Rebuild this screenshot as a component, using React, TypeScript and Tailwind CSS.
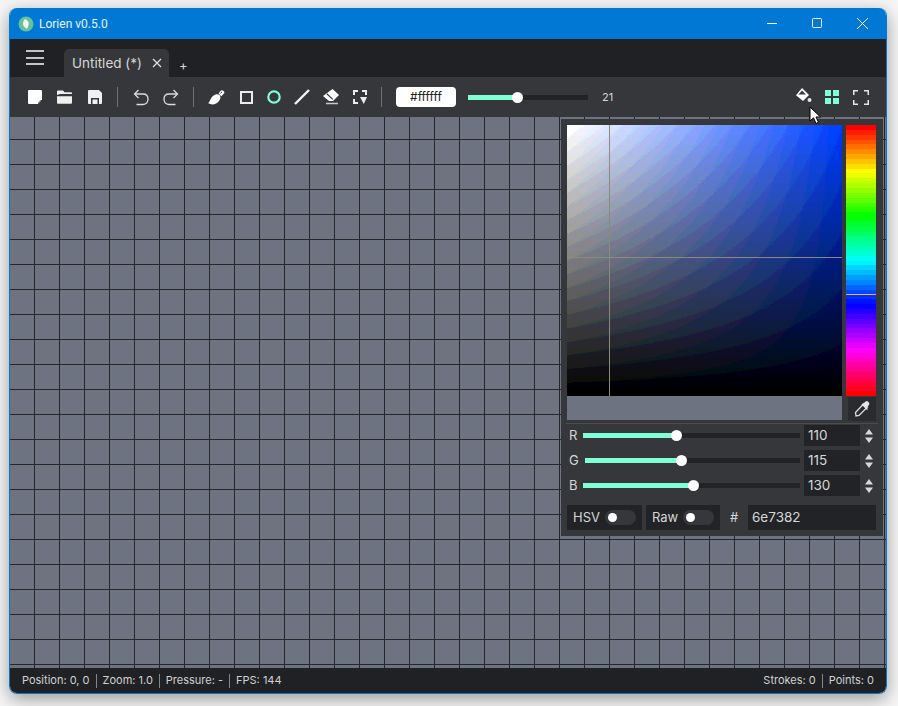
import type { ReactNode } from 'react';

const hueBands = Array.from({ length: 56 }, (_, i) => Math.round((i / 55) * 360) % 360);

// posterise the picker like the banded colours of the capture
const steps = (n: number) => Array.from({ length: n }, (_, i) => (i / (n - 1)).toFixed(3)).join(' ');

const rgbRows = [
  { label: 'R', value: 110, labelWidth: 'w-[16px]' },
  { label: 'G', value: 115, labelWidth: 'w-[18px]' },
  { label: 'B', value: 130, labelWidth: 'w-[16px]' },
];

function Separator({ className }: { className: string }) {
  return <div className={`h-[20px] w-px bg-[#6f7074] ${className}`} />;
}

function IconBox({ className, children }: { className: string; children: ReactNode }) {
  return <div className={`flex h-[20px] items-center justify-center ${className}`}>{children}</div>;
}

function ToggleBox({ label }: { label: string }) {
  return (
    <div className="flex h-[25px] items-center bg-[#222327] pl-[6px]">
      <span>{label}</span>
      <div className="absolute right-[6px] h-[15px] w-[31px] rounded-full bg-[#36373b]">
        <div className="absolute left-[3px] top-[3px] h-[9px] w-[9px] rounded-full bg-white" />
      </div>
    </div>
  );
}

function RgbRow({ label, value, labelWidth }: { label: string; value: number; labelWidth: string }) {
  return (
    <div className="flex h-[25px] items-center">
      <span className={`${labelWidth} pl-[2px] leading-none`}>{label}</span>
      <div className="relative h-[5px] flex-1 bg-[#222327]">
        <div className="h-full bg-[#7fffd4]" style={{ width: `${(value / 255) * 100}%` }} />
        <div
          className="absolute top-[-3px] -ml-[5.5px] h-[11px] w-[11px] rounded-full bg-white"
          style={{ left: `${(value / 255) * 100}%` }}
        />
      </div>
      <div className="ml-[4px] flex h-[21px] w-[56px] items-center bg-[#222327] pl-[4px] text-[13.5px]">{value}</div>
      <div className="flex w-[17px] flex-col items-center gap-[2px]">
        <svg width="8" height="6" viewBox="0 0 8 6">
          <path d="M4 0 8 5.500H0Z" fill="#d8d8d8" />
        </svg>
        <svg width="8" height="6" viewBox="0 0 8 6">
          <path d="M4 6 8 .5H0Z" fill="#d8d8d8" />
        </svg>
      </div>
    </div>
  );
}

export default function App() {
  return (
    <div className="relative h-[706px] w-[898px] overflow-hidden bg-[#f6f6f6] [font-family:Inter,sans-serif]">
      <svg width="0" height="0" className="absolute">
        <filter id="sv-bands" colorInterpolationFilters="sRGB">
          <feComponentTransfer>
            <feFuncR type="discrete" tableValues={steps(20)} />
            <feFuncG type="discrete" tableValues={steps(20)} />
            <feFuncB type="discrete" tableValues={steps(28)} />
          </feComponentTransfer>
        </filter>
      </svg>
      <div className="absolute left-[9px] top-[8px] flex h-[686px] w-[878px] flex-col overflow-hidden rounded-[8px] border border-t-0 border-[#0078d4] shadow-[0_5px_18px_rgba(0,0,0,0.38)]">
        {/* Title bar */}
        <div className="relative flex h-[31px] shrink-0 items-center bg-[#0078d4] pl-[8px]">
          <svg width="16" height="16" viewBox="0 0 16 16">
            <circle cx="8" cy="8" r="7.500" fill="#69c19b" />
            <path d="M6.800 3C9.800 4 11.300 6.400 10.600 9 10.200 10.600 9.400 11.800 9 12.800 8 11.800 5.400 10.800 5 8.400 4.700 6.400 6 4.600 6.800 3Z" fill="#f4f7f4" />
          </svg>
          <span className="ml-[5px] [font-family:Roboto,sans-serif] text-[12px] text-[#eaf6ff]">Lorien v0.5.0</span>
          <svg width="120" height="14" viewBox="0 0 120 14" className="absolute right-[12px] top-[8px]" fill="none" stroke="#fff" strokeWidth="1">
            <path d="M13 7.500H23" />
            <rect x="58.500" y="2.500" width="9" height="9" rx="1" />
            <path d="M103 2 114 13M114 2 103 13" />
          </svg>
        </div>

        {/* Menu and tabs */}
        <div className="relative flex h-[38px] shrink-0 items-end bg-[#202125] pl-[54px]">
          <div className="absolute left-[16px] top-[11px] flex w-[18px] flex-col gap-[4.500px]">
            <div className="h-[2px] bg-[#c4c4c4]" />
            <div className="h-[2px] bg-[#c4c4c4]" />
            <div className="h-[2px] bg-[#c4c4c4]" />
          </div>
          <div className="flex h-[28px] w-[105px] items-center rounded-t-[5px] bg-[#36373b] pl-[8px] text-[13.5px] text-[#d6d6d6]">
            <span className="w-[80px] shrink-0 whitespace-nowrap">Untitled (*)</span>
            <svg width="10" height="10" viewBox="0 0 10 10" stroke="#e2e2e2" strokeWidth="1.200">
              <path d="M1 1 9 9M9 1 1 9" />
            </svg>
          </div>
          <span className="mb-[3px] ml-[10px] text-[13px] leading-[18px] text-[#d6d6d6]">+</span>
        </div>

        {/* Toolbar */}
        <div className="relative flex h-[40px] shrink-0 items-center bg-[#36373b] pl-[10px]">
          <IconBox className="w-[30px]">
            <svg width="14" height="14" viewBox="0 0 14 14">
              <path d="M1 0H13Q14 0 14 1V9L9 14H1Q0 14 0 13V1Q0 0 1 0Z" fill="#fff" />
              <path d="M9 9H14V10H10.200V14H9Z" fill="#fff" />
              <path d="M10.800 11H13L10.800 13.200Z" fill="#9a9a9a" />
            </svg>
          </IconBox>
          <IconBox className="w-[30px]">
            <svg width="16" height="14" viewBox="0 0 16 14">
              <path d="M0 1.500Q0 .5 1 .5H6L7.500 2.200H14Q15 2.200 15 3.200V4H3L0 5Z" fill="#f0f0f0" />
              <path d="M0 6.300H15V12.800Q15 13.800 14 13.800H1Q0 13.800 0 12.800Z" fill="#f0f0f0" />
            </svg>
          </IconBox>
          <IconBox className="w-[30px]">
            <svg width="14" height="14" viewBox="0 0 14 14">
              <path d="M1 0H11L14 3V13Q14 14 13 14H1Q0 14 0 13V1Q0 0 1 0Z" fill="#f0f0f0" />
              <path d="M3 8H11V14H9.500V9.500H4.500V14H3Z" fill="#36373b" />
            </svg>
          </IconBox>
          <Separator className="ml-[7px]" />
          <IconBox className="ml-[8px] w-[30px]">
            <svg width="16" height="17" viewBox="0 0 16 17" fill="none" stroke="#dcdcdc" strokeWidth="1.300">
              <path d="M5.500 1 1.500 5 5.500 9" />
              <path d="M2 5H10Q15 5 15 10T10 15.500H3.500" />
            </svg>
          </IconBox>
          <IconBox className="w-[30px]">
            <svg width="16" height="17" viewBox="0 0 16 17" fill="none" stroke="#dcdcdc" strokeWidth="1.300">
              <path d="M10.500 1 14.500 5 10.500 9" />
              <path d="M14 5H6Q1 5 1 10T6 15.500H12.500" />
            </svg>
          </IconBox>
          <Separator className="ml-[7px]" />
          <IconBox className="ml-[8px] w-[28px]">
            <svg width="17" height="15" viewBox="0 0 17 15">
              <path d="M0 13C2 12.500 2 8.500 5 6 7.500 3.800 9.500 3.800 11.500 5 12.800 6.500 12.800 8.800 11 11 8.500 14.500 3.500 15.500 0 13Z" fill="#fff" />
              <path d="M10.500 3.500 13 .5Q14 -.2 15.500 1 17 2.500 16 3.500L13.300 6.200Z" fill="#fff" />
              <path d="M12.500 3.300 14 2" stroke="#36373b" strokeWidth="1" />
            </svg>
          </IconBox>
          <IconBox className="ml-[2px] w-[28px]">
            <svg width="13" height="13" viewBox="0 0 13 13" fill="none" stroke="#ececec" strokeWidth="2">
              <rect x="1" y="1" width="11" height="11" />
            </svg>
          </IconBox>
          <IconBox className="w-[28px]">
            <svg width="14" height="14" viewBox="0 0 14 14" fill="none" stroke="#7fffd4" strokeWidth="2.200">
              <circle cx="7" cy="7" r="5.700" />
            </svg>
          </IconBox>
          <IconBox className="w-[28px]">
            <svg width="16" height="16" viewBox="0 0 16 16" fill="none" stroke="#f4f4f4" strokeWidth="2.400">
              <path d="M1 15 15 1" />
            </svg>
          </IconBox>
          <IconBox className="ml-[1px] w-[28px]">
            <svg width="16" height="16" viewBox="0 0 16 16">
              <path d="M9.500 0 16 6 10 12H6L0 7Z" fill="#fff" />
              <path d="M3.800 4.700 9.800 10.400" stroke="#36373b" strokeWidth="1.200" />
              <path d="M3 13.800H15V15.200H3Z" fill="#c9c9c9" />
            </svg>
          </IconBox>
          <IconBox className="ml-[1px] w-[28px]">
            <svg width="14" height="14" viewBox="0 0 14 14">
              <path d="M0 0H5V2H2V5H0ZM9 0H14V5H12V2H9ZM0 9H2V12H5V14H0Z" fill="#ececec" />
              <path d="M7 7H14L10.800 14Z" fill="#ececec" />
            </svg>
          </IconBox>
          <Separator className="ml-[7px]" />
          <div className="ml-[14px] flex h-[20px] w-[60px] items-center justify-center rounded-[4px] bg-white text-[12px] text-[#202125]">
            #ffffff
          </div>
          <div className="relative ml-[12px] h-[5px] w-[120px] bg-[#222327]">
            <div className="h-full w-[50px] bg-[#7fffd4]" />
            <div className="absolute left-[44px] top-[-3px] h-[11px] w-[11px] rounded-full bg-white" />
          </div>
          <span className="ml-[14px] text-[11px] text-[#d6d6d6]">21</span>

          <div className="absolute left-[778px] top-[10px] flex">
            <IconBox className="w-[30px]">
              <svg width="16" height="18" viewBox="0 0 16 18" className="translate-x-[1px]">
                <path d="M6 0 13 7 7 13 0 7.200Z" fill="#fff" />
                <path d="M6 2.400 2.500 6.500H10Z" fill="#36373b" />
                <circle cx="13.500" cy="12" r="2" fill="#e4e4e4" />
              </svg>
            </IconBox>
            <IconBox className="w-[28px]">
              <svg width="14" height="14" viewBox="0 0 14 14" fill="#7fffd4">
                <rect width="6" height="6" />
                <rect x="8" width="6" height="6" />
                <rect y="8" width="6" height="6" />
                <rect x="8" y="8" width="6" height="6" />
              </svg>
            </IconBox>
            <IconBox className="w-[30px]">
              <svg width="16" height="15" viewBox="0 0 16 15">
                <path d="M0 0H5V1.500H1.500V5H0ZM11 0H16V5H14.500V1.500H11ZM0 10H1.500V13.500H5V15H0ZM14.500 10H16V15H11V13.500H14.500Z" fill="#e6e6e6" />
              </svg>
            </IconBox>
          </div>
        </div>

        {/* Canvas */}
        <div className="relative flex-1 bg-[#6e7382] bg-[linear-gradient(to_right,transparent_24px,#26272b_24px),linear-gradient(to_bottom,transparent_22px,#26272b_22px,#26272b_23px,transparent_23px)] bg-[size:25px_25px]">
          <div className="absolute left-[551px] top-[2px] h-[417px] w-[322px] bg-[#36373b] p-[6px] text-[13px] text-[#d6d6d6]">
            <div className="flex">
              <div className="w-[275px]">
                <div className="relative h-[271px]">
                  <div className="h-full bg-[linear-gradient(to_top,#000,transparent),linear-gradient(to_right,#fff,#0040ff)] [filter:url(#sv-bands)]" />
                  <div className="absolute bottom-0 left-[42px] top-0 w-px bg-[#8d8a7c]" />
                  <div className="absolute left-0 right-0 top-[132px] h-px bg-[#8d8a7c]" />
                </div>
                <div className="h-[24px] bg-[#6e7382]" />
              </div>
              <div className="ml-[4px] w-[30px]">
                <div className="relative flex h-[271px] flex-col">
                  {hueBands.map((h, i) => (
                    <div key={i} className="flex-1" style={{ background: `hsl(${h} 100% 50%)` }} />
                  ))}
                  <div className="absolute left-0 right-0 top-[169px] h-px bg-[#e8b64a]" />
                </div>
                <div className="ml-[2px] mt-[1px] flex h-[24px] w-[28px] items-center justify-center bg-[#2a2b2f]">
                  <svg width="18" height="18" viewBox="0 0 18 18" fill="none">
                    <path d="M11 3.500 14.500 7 6 15.500 3 16 2.500 12.500Z" stroke="#dcdcdc" strokeWidth="1.300" />
                    <path d="M10 4 12.500 1.500Q14 .5 15.500 2 17 3.500 16 5L13.500 7.500 15 9 14 10 8.500 4.500 9.500 3.500Z" fill="#e6e6e6" />
                  </svg>
                </div>
              </div>
            </div>
            <div className="-mx-[1px] mb-[-1px] mt-[2px] h-px bg-[#4b4c51]" />
            {rgbRows.map((row) => (
              <RgbRow key={row.label} {...row} />
            ))}
            <div className="mt-[7px] flex">
              <div className="relative w-[75px]">
                <ToggleBox label="HSV" />
              </div>
              <div className="relative ml-[4px] w-[74px]">
                <ToggleBox label="Raw" />
              </div>
              <span className="ml-[10px] w-[18px] leading-[25px]">#</span>
              <div className="flex h-[25px] w-[128px] items-center bg-[#222327] pl-[4px] text-[13.5px]">6e7382</div>
            </div>
          </div>

          <svg width="14" height="19" viewBox="0 0 14 19" className="absolute left-[799px] top-[-11px]">
            <path d="M1 1V15L4.500 11.800 7 17.500 9.500 16.300 7 11H11.500Z" fill="#fff" stroke="#000" strokeWidth="1" />
          </svg>
        </div>

        {/* Status bar */}
        <div className="flex h-[25px] shrink-0 items-center bg-[#202125] px-[12px] text-[11px] text-[#d2d2d2]">
          <span>Position: 0, 0</span>
          <div className="mx-[6px] h-[14px] w-px bg-[#85868a]" />
          <span>Zoom: 1.0</span>
          <div className="mx-[6px] h-[14px] w-px bg-[#85868a]" />
          <span>Pressure: -</span>
          <div className="mx-[6px] h-[14px] w-px bg-[#85868a]" />
          <span>FPS: 144</span>
          <span className="ml-auto">Strokes: 0</span>
          <div className="mx-[6px] h-[14px] w-px bg-[#85868a]" />
          <span>Points: 0</span>
        </div>
      </div>
    </div>
  );
}
